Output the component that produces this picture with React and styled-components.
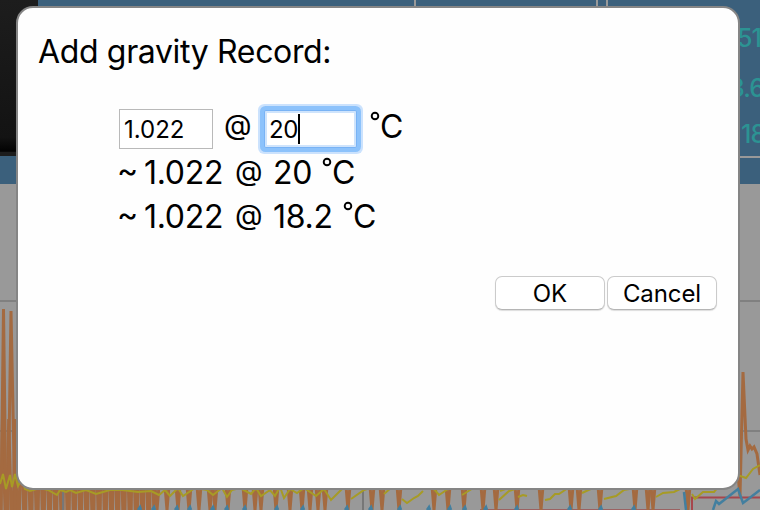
import React from "react";
import styled, { createGlobalStyle } from "styled-components";

const GlobalStyle = createGlobalStyle`
  * { box-sizing: border-box; }
  body { margin: 0; background: #999; font-family: Inter, "Liberation Sans", sans-serif; color: #000; }
`;

const Page = styled.div`
  position: relative;
  width: 760px;
  height: 510px;
  overflow: hidden;
`;

const Header = styled.div`
  display: flex;
  height: 184px;
  background: #3b607c;
`;

const Display = styled.div`
  flex: none;
  width: 38px;
  height: 156px;
  background: linear-gradient(#1d1d1d, #131313 88%, #020202 97%, #1c1c1c 97.5%);
`;

const Gauges = styled.div`
  display: flex;
  flex: 1;
  min-width: 0;
  height: 158px;
  border-bottom: 2px solid #999;
`;

const Panel = styled.div`
  flex: none;
  width: ${(p) => p.$width}px;
  border-right: 2px solid #999;
`;

const Readings = styled.div`
  flex: 1;
  min-width: 0;
  padding: 23px 0 0 121px;
  color: #2c9393;
`;

const Reading = styled.div`
  height: ${(p) => p.$height}px;
  padding-left: ${(p) => p.$indent}px;
  line-height: 30px;
  font-size: 25px;
  font-weight: 500;
  letter-spacing: -0.9px;
  white-space: nowrap;
`;

const Chart = styled.svg`
  display: block;
  width: 760px;
  height: 326px;
`;

const Dialog = styled.div`
  position: absolute;
  left: 16px;
  top: 6px;
  width: 724px;
  height: 484px;
  border: 2px solid #858585;
  border-radius: 17px;
  background: #fefefe;
  padding: 21px 21px 0 20px;
`;

const Title = styled.div`
  height: 44px;
  line-height: 45px;
  font-size: 32px;
  letter-spacing: -0.35px;
  white-space: nowrap;
`;

const Form = styled.div`
  margin: 29px 0 0 81px;
`;

const FieldRow = styled.div`
  display: flex;
  height: 49px;
  padding-top: 7px;
`;

const Field = styled.div`
  display: flex;
  align-items: center;
  width: 94px;
  height: 40px;
  padding-left: 4px;
  border: 1px solid #b9b9b9;
  background: #fff;
  font-size: 24px;
`;

const FocusedField = styled(Field)`
  width: 93px;
  height: 38px;
  margin: 1px 13px 0 13px;
  padding-left: 4px;
  border: 1px solid #79b3f5;
  border-radius: 2px;
  letter-spacing: -0.4px;
  box-shadow: 0 0 0 4px #8cc2fb, 0 0 0 6px #cbe2fd, inset 0 0 0 2px #cfe4fc;
`;

const Caret = styled.span`
  width: 2px;
  height: 30px;
  background: #000;
`;

const Result = styled.div`
  display: flex;
  height: 44px;
`;

const Part = styled.span`
  flex: none;
  width: ${(p) => p.$width}px;
  margin-top: ${(p) => p.$drop || 0}px;
  line-height: 44px;
  font-size: 32px;
  letter-spacing: -0.3px;
  white-space: nowrap;
`;

const Tilde = styled(Part)`
  width: 27px;
  margin: -2px 0 0 -2px;
`;

const At = styled(Part)`
  margin-left: ${(p) => p.$gap || 0}px;
  font-size: 28.5px;
  line-height: 39px;
`;

const RingGlyph = styled.svg`
  flex: none;
  width: 10px;
  height: 10px;
  margin-top: ${(p) => p.$top}px;
`;

const Actions = styled.div`
  display: flex;
  justify-content: flex-end;
  gap: 2px;
  margin-top: 37px;
`;

const Button = styled.button`
  width: 110px;
  height: 34px;
  padding: 2px 0 0;
  border: 1px solid #cbcbcb;
  border-bottom-color: #b5b5b5;
  border-radius: 7px;
  background: #fff;
  box-shadow: 0 1px 1px #ddd;
  font: 24px/30px Inter, "Liberation Sans", sans-serif;
  letter-spacing: -0.1px;
  color: #000;
`;

const Ring = ({ top }) => (
  <RingGlyph $top={top} viewBox="0 0 10 10">
    <circle cx="5" cy="5" r="3.3" fill="none" stroke="#000" strokeWidth="1.9" />
  </RingGlyph>
);

const oscillations = () => {
  let d = "M0 326";
  for (let x = 0; x < 150; x += 6.2) {
    const top = x < 17 ? 235 : 230;
    d += ` L${x + 1} 326 L${x + 2.5} ${top} L${x + 5} 326`;
  }
  return d;
};

const bursts = [157, 167, 178, 189, 199, 210, 215, 228, 245, 255, 261, 276, 290, 302, 310, 318, 325, 348, 372, 382, 399, 434, 448, 464, 483, 496, 517, 541, 571, 579, 600, 635, 648, 653, 688];
const coolPoints = [140, 154, 177, 190, 213, 227, 245, 277, 303, 347, 371, 400, 429, 450, 465, 486, 517, 570, 601, 634];

function History() {
  return (
    <Chart viewBox="0 0 760 326" fill="none">
      <rect width="760" height="326" fill="#999" />
      <path d="M0 117H760M0 247H760" stroke="#808080" strokeWidth="2" />
      <path d="M480 325.500H680" stroke="#9b6262" />
      <path d="M692 326V313.500H760" stroke="#a6464d" strokeWidth="2" />
      <g stroke="#a46a40" strokeWidth="3">
        <path d={oscillations()} />
        <path d="M1 326 L3.500 125 L6 326 M8 326 L11 127 L15 326" />
        {bursts.map((x) => (
          <path key={x} d={`M${x - 2.5} 296 L${x} 326 M${x + 2.5} 296 L${x} 326`} />
        ))}
        <path d="M738 290 L740 312 L743 188 L746 255 L748 266 L750 262 L752 265 L754 263 L757 270 L760 291" />
      </g>
      <path d="M63 0V326M363 0V326" stroke="#777" strokeWidth="2" />
      <path
        d="M0 300 L3 290 L6 305 L10 291 L12 303 L15 290 L18 302 L22 295 L25 305 L30 307 L40 304 L48 306 L57 311 L60 306 L66 308 L70 306 L76 309 L86 306 L96 310 L110 306 L122 306 L138 308 L151 307 L159 311 L165 306 L170 312 L178 304 L183 312 L195 304 L207 306 L213 311 L222 304 L227 313 L232 306 L240 304 L251 310 L256 304 L261 312 L270 306 L275 312 L280 303 L284 314 L290 305 L297 309 L304 304 L316 312 L324 305 L331 316 L343 304 M351 315 L364 306 L370 304 M384 310 L392 303 M402 315 L407 319 L414 314 L418 312 L423 307 M434 305 L439 311 L451 303 M462 311 L475 303 M499 316 L509 307 L515 305 M500 307 L508 304 M518 313 L523 311 L527 312 M545 316 L550 315 L555 310 L559 310 L571 302 M582 309 L595 303 M604 315 L616 312 L624 306 L635 304 M656 313 L663 309 L674 308 L684 303 M692 310 L695 315 L703 308 L714 308 L719 302 L735 290 L746 294 L753 285 L760 281"
        stroke="#a79b25"
        strokeWidth="2"
      />
      <g stroke="#437f9f" strokeWidth="2.500">
        {coolPoints.map((x) => (
          <path key={x} d={`M${x - 2} 326 L${x} 323 L${x + 1} 326`} />
        ))}
        <path d="M684 308 L686 326 M713 326 L716 317 L719 320 L738 305 L743 319 L747 316 L760 306" />
      </g>
    </Chart>
  );
}

export default function App() {
  return (
    <Page>
      <GlobalStyle />
      <Header>
        <Display />
        <Gauges>
          <Panel $width={378} />
          <Panel $width={182} />
          <Panel $width={10} />
          <Readings>
            <Reading $height={50} $indent={8}>51</Reading>
            <Reading $height={46} $indent={0}>3.6</Reading>
            <Reading $height={40} $indent={12}>18</Reading>
          </Readings>
        </Gauges>
      </Header>
      <History />
      <Dialog>
        <Title>Add gravity Record:</Title>
        <Form>
          <FieldRow>
            <Field>1.022</Field>
            <At $gap={11} $width={27} $drop={-4}>@</At>
            <FocusedField>20<Caret /></FocusedField>
            <Ring top={2} />
            <Part $width={24} $drop={-4}>C</Part>
          </FieldRow>
          <Result>
            <Tilde>~</Tilde>
            <Part $width={91}>1.022</Part>
            <At $width={38}>@</At>
            <Part $width={49}>20</Part>
            <Ring top={6} />
            <Part $width={24}>C</Part>
          </Result>
          <Result>
            <Tilde>~</Tilde>
            <Part $width={91}>1.022</Part>
            <At $width={38}>@</At>
            <Part $width={70}>18.2</Part>
            <Ring top={6} />
            <Part $width={24}>C</Part>
          </Result>
        </Form>
        <Actions>
          <Button>OK</Button>
          <Button>Cancel</Button>
        </Actions>
      </Dialog>
    </Page>
  );
}
